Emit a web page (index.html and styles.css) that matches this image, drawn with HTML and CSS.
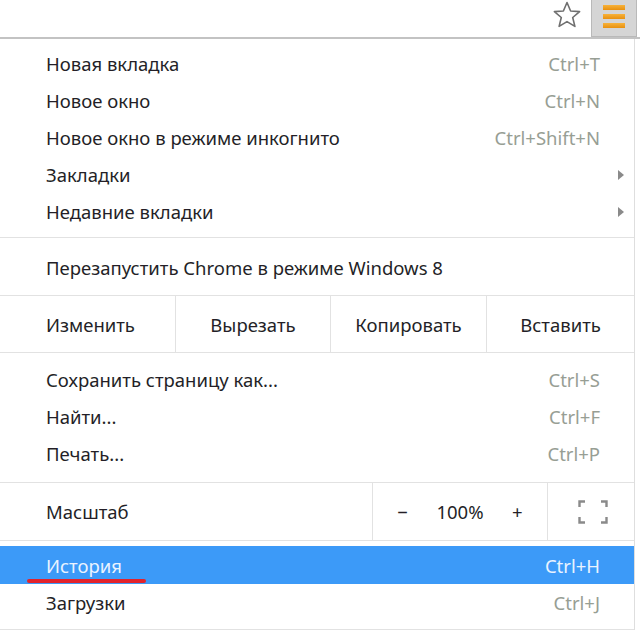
FILE: index.html
```html
<!DOCTYPE html>
<html>
<head>
<meta charset="UTF-8">
<title>Меню Chrome</title>
<link rel="stylesheet" href="styles.css">
</head>
<body>
<div class="toolbar">
	<svg class="star" width="30" height="30" viewBox="0 0 30 30">
		<path d="M15 2.5 L18.6 11 L27.6 11.6 L20.7 17.5 L22.9 26.4 L15 21.6 L7.1 26.4 L9.3 17.5 L2.4 11.6 L11.4 11 Z" fill="none" stroke="#6f6f6f" stroke-width="1.6" stroke-linejoin="round"/>
	</svg>
	<div class="menu_btn">
		<span class="bar"></span>
		<span class="bar"></span>
		<span class="bar"></span>
	</div>
</div>
<div class="menu">
	<div class="group first">
		<div class="item"><span>Новая вкладка</span><span class="key">Ctrl+T</span></div>
		<div class="item"><span>Новое окно</span><span class="key">Ctrl+N</span></div>
		<div class="item"><span>Новое окно в режиме инкогнито</span><span class="key">Ctrl+Shift+N</span></div>
		<div class="item sub"><span>Закладки</span><span class="arrow"></span></div>
		<div class="item sub"><span>Недавние вкладки</span><span class="arrow"></span></div>
	</div>
	<div class="group restart">
		<div class="item"><span>Перезапустить Chrome в режиме Windows 8</span></div>
	</div>
	<div class="edit_row">
		<div class="cell">Изменить</div>
		<div class="cell">Вырезать</div>
		<div class="cell">Копировать</div>
		<div class="cell">Вставить</div>
	</div>
	<div class="group page">
		<div class="item"><span>Сохранить страницу как...</span><span class="key">Ctrl+S</span></div>
		<div class="item"><span>Найти...</span><span class="key">Ctrl+F</span></div>
		<div class="item"><span>Печать...</span><span class="key">Ctrl+P</span></div>
	</div>
	<div class="zoom_row">
		<div class="zoom_label">Масштаб</div>
		<div class="zoom_ctrl">
			<span class="zbtn">−</span>
			<span class="zval">100%</span>
			<span class="zbtn">+</span>
		</div>
		<div class="full">
			<svg width="30" height="24" viewBox="0 0 30 24">
				<path d="M1.5 7 V1.5 H7 M23 1.5 H28.5 V7 M28.5 17 V22.5 H23 M7 22.5 H1.5 V17" fill="none" stroke="#8a8a8a" stroke-width="2.4"/>
			</svg>
		</div>
	</div>
	<div class="group last">
		<div class="item active"><span class="mark">История</span><span class="key">Ctrl+H</span></div>
		<div class="item"><span>Загрузки</span><span class="key">Ctrl+J</span></div>
	</div>
</div>
</body>
</html>
```

FILE: styles.css
```css
body{
	margin:0;
	background:#fff;
	font-family:"Noto Sans","Open Sans",sans-serif;
	font-size:18.5px;
	color:#241f27;
}
.toolbar{
	height:37px;
	border-bottom:2px solid #c3c3c3;
	display:flex;
	justify-content:flex-end;
	align-items:flex-start;
}
.star{
	margin-right:9px;
}
.menu_btn{
	width:46px;
	height:37px;
	margin-right:3px;
	box-sizing:border-box;
	background:#d5d5d5;
	border:1px solid #b9b9b9;
	border-top:0;
	display:flex;
	flex-direction:column;
	align-items:center;
	padding-top:5px;
	gap:4px;
}
.bar{
	display:block;
	width:22px;
	height:5px;
	background:linear-gradient(#f7b23a,#e8900f);
}
.menu{
	width:635px;
	border-right:1px solid #dedede;
	box-sizing:border-box;
}
.group{
	border-bottom:1px solid #e2e2e2;
}
.group.first{
	padding:6px 0 7px;
}
.group.restart{
	padding:11px 0 9px;
}
.group.page{
	padding:8px 0 10px;
}
.group.last{
	padding:5px 0 8px;
}
.item{
	height:37px;
	display:flex;
	align-items:center;
	justify-content:space-between;
	padding:0 34px 0 46px;
	position:relative;
}
.item.sub{
	padding-right:10px;
}
.key{
	color:#979e94;
}
.arrow{
	width:0;
	height:0;
	border-left:6px solid #8a8a8a;
	border-top:5px solid transparent;
	border-bottom:5px solid transparent;
}
.item.active{
	height:38px;
	background:#3c9af8;
	color:#eaf3ff;
}
.item.active .key{
	color:#eaf3ff;
}
.mark::after{
	content:"";
	position:absolute;
	left:27px;
	top:33px;
	width:119px;
	height:4px;
	border-radius:2px;
	background:#e2232c;
}
.edit_row{
	display:grid;
	grid-template-columns:175px 155px 156px 1fr;
	height:56px;
	border-bottom:1px solid #e2e2e2;
}
.cell{
	display:flex;
	align-items:center;
	justify-content:center;
	border-left:1px solid #e2e2e2;
}
.cell:first-child{
	border-left:0;
	justify-content:flex-start;
	padding-left:46px;
}
.zoom_row{
	display:grid;
	grid-template-columns:372px 176px 1fr;
	height:57px;
	border-bottom:1px solid #e2e2e2;
}
.zoom_label{
	display:flex;
	align-items:center;
	padding-left:46px;
}
.zoom_ctrl{
	display:flex;
	align-items:center;
	border-left:1px solid #e2e2e2;
	border-right:1px solid #e2e2e2;
}
.zbtn{
	width:60px;
	text-align:center;
}
.zval{
	width:56px;
	text-align:center;
}
.full{
	display:flex;
	align-items:center;
	justify-content:center;
	padding-left:4px;
}
```
